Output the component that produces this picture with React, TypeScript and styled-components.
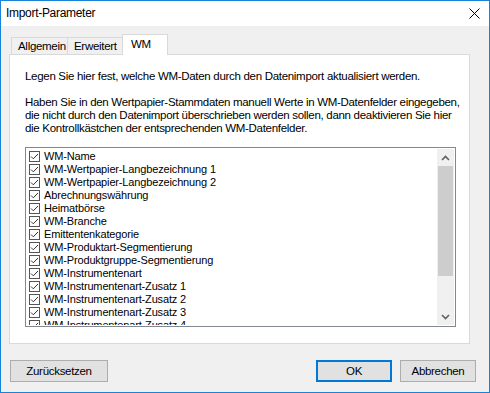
import React from "react";
import styled, { createGlobalStyle } from "styled-components";

const Global = createGlobalStyle`
  html, body { margin: 0; padding: 0; background: #ffffff; }
  * { box-sizing: border-box; }
`;

const uiFont = `"Liberation Sans", Arial, sans-serif`;

const Window = styled.div`
  width: 490px;
  height: 393px;
  border: 1px solid #1883d7;
  display: flex;
  flex-direction: column;
  font-family: ${uiFont};
  font-size: 11.5px;
  letter-spacing: -0.3px;
  color: #000;
  overflow: hidden;
`;

const TitleBar = styled.div`
  height: 25px;
  flex: none;
  background: #ffffff;
  display: flex;
  align-items: center;
  justify-content: space-between;
  padding-left: 5px;
  padding-right: 9px;
`;

const Title = styled.span`
  font-size: 12px;
  line-height: 16px;
  margin-top: -1px;
`;

const Body = styled.div`
  flex: 1;
  background: #f0f0f0;
  display: flex;
  flex-direction: column;
  padding: 8px 0 0 8px;
`;

const TabRow = styled.div`
  display: flex;
  flex: none;
  align-items: flex-end;
  height: 21px;
  padding-left: 2px;
  margin-bottom: -1px;
  position: relative;
  z-index: 1;
`;

const Tab = styled.div<{ $active?: boolean; $w: number }>`
  width: ${(p) => p.$w}px;
  height: ${(p) => (p.$active ? 21 : 18)}px;
  margin-left: -1px;
  &:first-child { margin-left: 0; }
  border: 1px solid #d9d9d9;
  border-bottom: ${(p) => (p.$active ? "none" : "1px solid #d9d9d9")};
  background: ${(p) => (p.$active ? "#ffffff" : "#f0f0f0")};
  padding-left: ${(p) => (p.$active ? 8 : 6)}px;
  padding-top: ${(p) => (p.$active ? 2 : 1)}px;
  line-height: 15px;
  white-space: nowrap;
`;

const Panel = styled.div`
  width: 461px;
  height: 290px;
  flex: none;
  background: #ffffff;
  border: 1px solid #d9d9d9;
  padding: 15px 0 0 15px;
  display: flex;
  flex-direction: column;
`;

const Para = styled.p`
  margin: 0 0 13px 0;
  line-height: 13px;
  white-space: pre;
`;

const ListBox = styled.div`
  width: 431px;
  height: 180px;
  flex: none;
  border: 1px solid #828790;
  padding: 1px;
  display: flex;
  margin-top: -1px;
`;

const Items = styled.div`
  flex: 1;
  overflow: hidden;
  font-size: 11px;
  letter-spacing: -0.15px;
  padding-top: 1px;
`;

const Item = styled.div`
  height: 13px;
  display: flex;
  align-items: center;
  padding-left: 2px;
  gap: 4px;
  white-space: nowrap;
  line-height: 13px;
`;

const ScrollBar = styled.div`
  width: 17px;
  background: #f0f0f0;
  display: flex;
  flex-direction: column;
`;

const Arrow = styled.div`
  height: 17px;
  display: flex;
  align-items: center;
  justify-content: center;
`;

const Thumb = styled.div`
  height: 110px;
  margin: 0 1px;
  background: #cdcdcd;
`;

const Track = styled.div`
  flex: 1;
`;

const Footer = styled.div`
  display: flex;
  flex: none;
  align-items: center;
  height: 22px;
  margin-top: 16px;
  padding-left: 1px;
  padding-right: 13px;
`;

const Button = styled.button<{ $primary?: boolean; $w: number }>`
  width: ${(p) => p.$w}px;
  height: 22px;
  background: #e1e1e1;
  border: ${(p) => (p.$primary ? "2px solid #0078d7" : "1px solid #adadad")};
  font-family: ${uiFont};
  font-size: 11.5px;
  letter-spacing: -0.3px;
  line-height: 16px;
  color: #000;
  padding: 0;
  margin-left: 8px;
  &:first-child { margin-left: 0; }
`;

const Spacer = styled.div`
  flex: 1;
`;

const CheckIcon = () => (
  <svg width="11" height="11" viewBox="0 0 11 11" style={{ flex: "none" }}>
    <rect x="0.5" y="0.5" width="10" height="10" fill="#fff" stroke="#555" />
    <polyline points="2,5.5 4.3,7.8 9,3" fill="none" stroke="#333" strokeWidth="1" />
  </svg>
);

const CloseIcon = () => (
  <svg width="11" height="11" viewBox="0 0 11 11">
    <path d="M0.5 0.5 L10.5 10.5 M10.5 0.5 L0.5 10.5" stroke="#000" strokeWidth="1" />
  </svg>
);

const UpIcon = () => (
  <svg width="9" height="6" viewBox="0 0 9 6">
    <polyline points="1,5 4.5,1.5 8,5" fill="none" stroke="#606060" strokeWidth="1.6" />
  </svg>
);

const DownIcon = () => (
  <svg width="9" height="6" viewBox="0 0 9 6">
    <polyline points="1,1 4.5,4.5 8,1" fill="none" stroke="#606060" strokeWidth="1.6" />
  </svg>
);

const fields = [
  "WM-Name",
  "WM-Wertpapier-Langbezeichnung 1",
  "WM-Wertpapier-Langbezeichnung 2",
  "Abrechnungswährung",
  "Heimatbörse",
  "WM-Branche",
  "Emittentenkategorie",
  "WM-Produktart-Segmentierung",
  "WM-Produktgruppe-Segmentierung",
  "WM-Instrumentenart",
  "WM-Instrumentenart-Zusatz 1",
  "WM-Instrumentenart-Zusatz 2",
  "WM-Instrumentenart-Zusatz 3",
  "WM-Instrumentenart-Zusatz 4",
];

export default function App() {
  return (
    <>
      <Global />
      <Window>
        <TitleBar>
          <Title>Import-Parameter</Title>
          <CloseIcon />
        </TitleBar>
        <Body>
          <TabRow>
            <Tab $w={57}>Allgemein</Tab>
            <Tab $w={56}>Erweitert</Tab>
            <Tab $w={46} $active>WM</Tab>
          </TabRow>
          <Panel>
            <Para>Legen Sie hier fest, welche WM-Daten durch den Datenimport aktualisiert werden.</Para>
            <Para>
              {"Haben Sie in den Wertpapier-Stammdaten manuell Werte in WM-Datenfelder eingegeben,\ndie nicht durch den Datenimport überschrieben werden sollen, dann deaktivieren Sie hier\ndie Kontrollkästchen der entsprechenden WM-Datenfelder."}
            </Para>
            <ListBox>
              <Items>
                {fields.map((f) => (
                  <Item key={f}>
                    <CheckIcon />
                    <span>{f}</span>
                  </Item>
                ))}
              </Items>
              <ScrollBar>
                <Arrow><UpIcon /></Arrow>
                <Thumb />
                <Track />
                <Arrow><DownIcon /></Arrow>
              </ScrollBar>
            </ListBox>
          </Panel>
          <Footer>
            <Button $w={98}>Zurücksetzen</Button>
            <Spacer />
            <Button $w={76} $primary>OK</Button>
            <Button $w={76}>Abbrechen</Button>
          </Footer>
        </Body>
      </Window>
    </>
  );
}
